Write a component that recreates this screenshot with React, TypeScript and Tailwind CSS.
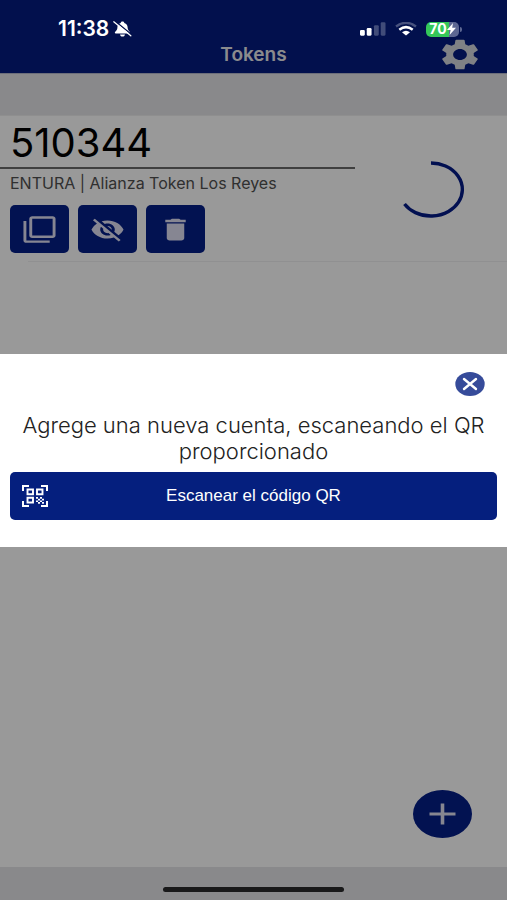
import React from "react";
import {
  MdDelete,
  MdFilterNone,
  MdSettings,
  MdVisibilityOff,
} from "react-icons/md";

function StatusBar() {
  return (
    <div className="absolute inset-x-0 top-0 z-20 flex h-[58px] items-center justify-between pr-[45px] pl-[58px] text-white">
      <div className="flex items-center gap-1">
        <span className="text-[21px] leading-6 font-semibold">11:38</span>
        <svg className="h-[16px] w-[19px]" viewBox="0 0 19 16" fill="currentColor" aria-hidden="true">
          <path d="M9.500.500C10.700.500 11.300 1.200 11.300 2 13.600 2.700 14.600 4.500 14.600 6.500 14.600 9.500 16.500 10.200 17 11.300 17.200 12 16.800 12.400 16.200 12.400H2.600C2 12.400 1.700 12 1.900 11.300 2.400 10.200 4.400 9.500 4.400 6.500 4.400 4.500 5.400 2.700 7.700 2 7.700 1.200 8.300.500 9.500.500ZM7 13.400H12C11.600 14.900 10.700 15.600 9.500 15.600S7.400 14.900 7 13.400Z" />
          <path d="M2.200.200 18.600 13.600" stroke="#02104d" strokeWidth="1.300" />
          <path d="M.800.800 17.800 14.800" stroke="#fff" strokeWidth="1.300" strokeLinecap="round" />
        </svg>
      </div>
      <div className="flex items-center gap-[9px]">
        <svg className="h-[14px] w-[26px]" viewBox="0 0 27 14" fill="currentColor" aria-hidden="true">
          <rect x="0" y="8" width="5" height="6" rx="1.2" />
          <rect x="7" y="6" width="5" height="8" rx="1.2" />
          <rect x="14.500" y="3" width="5" height="11" rx="1.2" opacity=".25" />
          <rect x="21.500" y="0" width="5" height="14" rx="1.2" opacity=".25" />
        </svg>
        <svg className="h-[14px] w-[22px]" viewBox="0 0 22 14" fill="none" stroke="currentColor" aria-hidden="true">
          <path d="M1 4.500Q11-2.800 21 4.500" strokeWidth="2.400" opacity=".28" />
          <path d="M4.300 7.700Q11 2.700 17.700 7.700" strokeWidth="2.600" />
          <path d="M7 10.200Q11 7.200 15 10.200L11 13.500Z" fill="currentColor" stroke="none" />
        </svg>
        <div className="flex items-center gap-px">
          <div className="flex h-[15px] w-[33px] items-center justify-center rounded-[5px] bg-linear-to-r from-[#34c759] from-70% to-[#5d6792] to-70%">
            <span className="text-[14px] leading-4 font-bold">70</span>
            <svg className="h-[12px] w-[9px]" viewBox="0 0 9 12" fill="currentColor" aria-hidden="true">
              <path d="M6 0 0 7h3.600L2.600 12 9 4.800H5.200Z" />
            </svg>
          </div>
          <div className="h-[5px] w-[2px] rounded-r bg-[#5d6792]" />
        </div>
      </div>
    </div>
  );
}

function Header() {
  return (
    <header className="grid grid-cols-[1fr_auto_1fr] items-center border-b border-[#b4b8cc] bg-[#041b80] px-6 pt-9">
      <h1 className="col-start-2 text-[19px] leading-6 font-semibold text-[#e8e8ec]">Tokens</h1>
      <button type="button" aria-label="Ajustes" className="justify-self-end text-[#d4d7de]">
        <MdSettings className="h-[37px] w-[46px]" preserveAspectRatio="none" />
      </button>
    </header>
  );
}

function TokenAction({ label, children }: { label: string; children: React.ReactNode }) {
  return (
    <button
      type="button"
      aria-label={label}
      className="flex h-12 w-[59px] items-center justify-center rounded-[5px] bg-[#041e88] text-[#dfe0f4]"
    >
      {children}
    </button>
  );
}

function TokenCard() {
  return (
    <section className="border-t border-[#eeeeee] bg-white">
      <div className="flex">
        <div className="w-[70%]">
          <p className="border-b-2 border-[#6a6a6a] pt-[3px] pl-[10px] text-[40px] leading-[48px] text-black">510344</p>
          <p className="pt-1 pl-[10px] text-[16px] leading-5 whitespace-nowrap text-[#505050]">
            ENTURA | Alianza Token Los Reyes
          </p>
          <div className="flex gap-[9px] pt-3 pb-2 pl-[10px]">
            <TokenAction label="Copiar">
              <MdFilterNone className="h-[29px] w-[35px]" preserveAspectRatio="none" />
            </TokenAction>
            <TokenAction label="Ocultar">
              <MdVisibilityOff className="h-[29px] w-[35px]" preserveAspectRatio="none" />
            </TokenAction>
            <TokenAction label="Eliminar">
              <MdDelete className="h-[29px] w-[35px]" preserveAspectRatio="none" />
            </TokenAction>
          </div>
        </div>
        <div className="flex flex-1 items-center justify-center">
          <svg className="h-[60px] w-[72px]" viewBox="0 0 72 60" fill="none" aria-hidden="true">
            <path d="M36 4A31.500 26.500 0 1 1 9.500 45" stroke="#041b88" strokeWidth="3.400" />
          </svg>
        </div>
      </div>
      <div className="ml-7 border-b border-[#f0f0f2]" />
    </section>
  );
}

function QrScanIcon() {
  return (
    <svg className="h-[22px] w-[26px]" viewBox="0 0 26 22" fill="none" stroke="currentColor" aria-hidden="true">
      <path d="M1 6V1H7M19 1H25V6M25 16V21H19M7 21H1V16" strokeWidth="2" />
      <path d="M5.500 4.500H11V9.200H5.500ZM15 4.500H20.500V9.200H15ZM5.500 12.800H11V17.500H5.500Z" strokeWidth="1.900" />
      <path
        d="M14 12h2v1.700h-2zM18 12h2v1.700h-2zM16 13.700h2v1.700h-2zM20 13.700h2v1.700h-2zM14 15.400h2v1.700h-2zM18 15.400h2v1.700h-2zM16 17.100h2v1.700h-2zM20 17.100h2v1.700h-2z"
        fill="currentColor"
        stroke="none"
      />
    </svg>
  );
}

function AddAccountDialog() {
  return (
    <div className="absolute inset-0 z-10 flex items-center bg-black/40">
      <div role="dialog" aria-modal="true" aria-labelledby="dialog-text" className="w-full bg-white px-[10px] pt-[18px] pb-[27px]">
        <div className="flex justify-end pr-3">
          <button type="button" aria-label="Cerrar">
            <svg className="h-6 w-[30px]" viewBox="0 0 30 24" fill="none" aria-hidden="true">
              <ellipse cx="15" cy="12" rx="14.700" ry="12" fill="#364b9a" />
              <path d="M9 7 21 17M21 7 9 17" stroke="#fff" strokeWidth="2.400" strokeLinecap="round" />
            </svg>
          </button>
        </div>
        <p id="dialog-text" className="pt-4 pb-2 text-center text-[22px] leading-[26px] font-light text-[#222222]">
          Agrege una nueva cuenta, escaneando el QR proporcionado
        </p>
        <button
          type="button"
          className="grid h-12 w-full grid-cols-[26px_1fr_26px] items-center rounded-[5px] bg-[#051f7e] px-3 text-white"
        >
          <QrScanIcon />
          <span className="font-['Liberation_Sans',Arial,sans-serif] text-[17px] leading-5">Escanear el código QR</span>
        </button>
      </div>
    </div>
  );
}

export default function App() {
  return (
    <div className="relative flex min-h-screen flex-col bg-white font-['Inter','Roboto',sans-serif]">
      <StatusBar />
      <Header />
      <div className="h-[41px] bg-[#e5e5e8]" />
      <TokenCard />
      <main className="flex flex-1 items-end justify-end pr-[35px] pb-[29px]">
        <button type="button" aria-label="Agregar cuenta">
          <svg className="h-12 w-[59px]" viewBox="0 0 59 48" aria-hidden="true">
            <ellipse cx="29.500" cy="24" rx="29.500" ry="24" fill="#041e88" />
            <path d="M29.500 13.500V34.500" stroke="#dfe0f0" strokeWidth="3.600" />
            <path d="M16.500 24H42.500" stroke="#dfe0f0" strokeWidth="3" />
          </svg>
        </button>
      </main>
      <footer className="h-[33px] bg-[#e5e5e8]" />
      <div className="absolute inset-x-0 bottom-2 z-20 mx-auto h-[5px] w-[181px] rounded-full bg-[#19191a]" />
      <AddAccountDialog />
    </div>
  );
}
